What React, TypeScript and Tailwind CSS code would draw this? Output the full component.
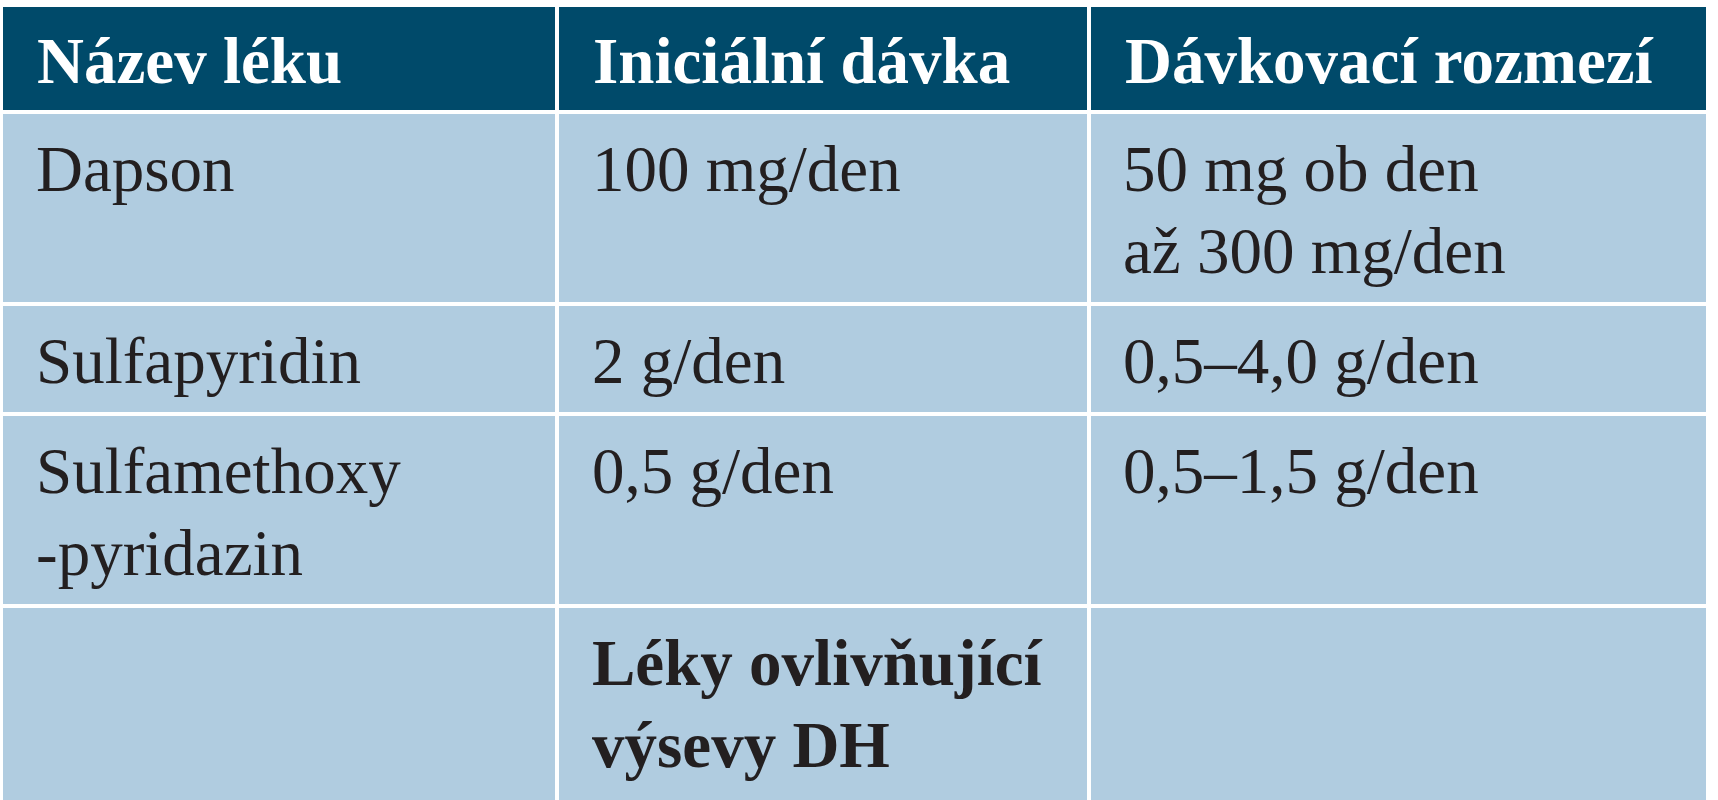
type Row = {
  name: React.ReactNode;
  initial: React.ReactNode;
  range: React.ReactNode;
  bold?: boolean;
};

const rows: Row[] = [
  {
    name: "Dapson",
    initial: "100 mg/den",
    range: (
      <>
        50 mg ob den
        <br />
        až 300 mg/den
      </>
    ),
  },
  { name: "Sulfapyridin", initial: "2 g/den", range: "0,5–4,0 g/den" },
  {
    name: (
      <>
        Sulfamethoxy
        <br />
        -pyridazin
      </>
    ),
    initial: "0,5 g/den",
    range: "0,5–1,5 g/den",
  },
  {
    name: "",
    initial: (
      <>
        Léky ovlivňující
        <br />
        výsevy DH
      </>
    ),
    range: "",
    bold: true,
  },
];

export default function App() {
  return (
    <div className="h-[800px] overflow-hidden bg-white pl-[3px] pt-[7px] [font-family:Liberation_Serif,serif]">
      <div className="grid w-[1703px] grid-cols-[552px_528px_615px] gap-[4px] text-[65px] leading-[82px]">
        {["Název léku", "Iniciální dávka", "Dávkovací rozmezí"].map((h) => (
          <div
            key={h}
            className="bg-[#004a6a] pl-[34px] pt-[13px] pb-[8px] font-bold text-white"
          >
            {h}
          </div>
        ))}

        {rows.map((r, i) => {
          const last = i === rows.length - 1;
          const cell =
            "bg-[#b0cce0] pt-[14px] text-[#231f20] " +
            (last ? "pb-[40px]" : "pb-[10px]");
          return (
            <div key={i} className="contents">
              <div className={cell + " pl-[33px]"}>{r.name}</div>
              <div className={cell + " pl-[33px] " + (r.bold ? "font-bold" : "")}>
                {r.initial}
              </div>
              <div className={cell + " pl-[32px]"}>{r.range}</div>
            </div>
          );
        })}
      </div>
    </div>
  );
}
